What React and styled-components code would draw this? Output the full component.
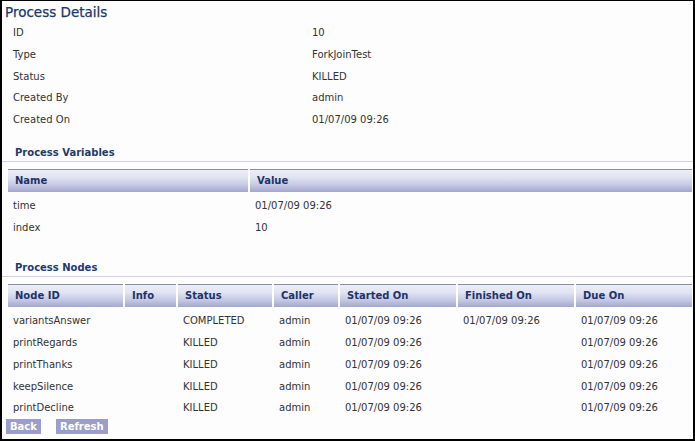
import React from "react";
import styled, { createGlobalStyle } from "styled-components";

const Global = createGlobalStyle`
  html, body { margin: 0; padding: 0; background: #fff; }
  * { box-sizing: border-box; }
`;

const Frame = styled.div`
  width: 695px;
  height: 441px;
  border-style: solid;
  border-color: #000;
  border-width: 1px 2px 2px 2px;
  background: #fdfdfd;
  font-family: "DejaVu Sans", Verdana, sans-serif;
  font-size: 10px;
  color: #333;
  overflow: hidden;
`;

const Title = styled.h1`
  margin: 0;
  height: 21px;
  padding: 2px 0 0 3px;
  font-size: 13.5px;
  line-height: 19px;
  font-weight: normal;
  color: #1c3869;
  -webkit-text-stroke: 0.25px #1c3869;
`;

const DetailRow = styled.div`
  display: grid;
  grid-template-columns: 299px 1fr;
  height: 21.75px;
  line-height: 21.75px;
  padding-left: 11px;
`;

const SectionHeading = styled.h2`
  margin: ${(p) => p.$top}px 0 0 0;
  padding-left: 13px;
  height: 17px;
  line-height: 16px;
  font-size: 10px;
  font-weight: bold;
  color: #1f3a6b;
  border-bottom: 1px solid #d4d0dc;
`;

const Table = styled.div`
  margin: 7px 1px 0 6px;
`;

const HeaderRow = styled.div`
  display: grid;
  grid-template-columns: ${(p) => p.$cols};
  column-gap: 2px;
  height: 23px;
`;

const HeaderCell = styled.div`
  border-top: 1px solid #8a8ca6;
  background: linear-gradient(
    to bottom,
    #eceef7 0%,
    #e0e3f1 35%,
    #c3c7e3 70%,
    #a2a7cc 100%
  );
  padding-left: 7px;
  line-height: 21px;
  font-weight: bold;
  color: #1e3369;
  white-space: nowrap;
  overflow: hidden;
`;

const Body = styled.div`
  padding-top: 3px;
`;

const BodyRow = styled.div`
  display: grid;
  grid-template-columns: ${(p) => p.$cols};
  column-gap: 2px;
  height: 21.75px;
  line-height: 21.75px;
`;

const BodyCell = styled.div`
  padding-left: 5px;
  white-space: nowrap;
  overflow: hidden;
`;

const ButtonBar = styled.div`
  display: flex;
  gap: 15px;
  margin: 0 0 0 4px;
`;

const Button = styled.button`
  border: none;
  margin: 0;
  height: 15px;
  padding: 0 4px;
  background: #9b9ecb;
  color: #fff;
  font-family: "DejaVu Sans", Verdana, sans-serif;
  font-size: 10px;
  font-weight: bold;
  line-height: 15px;
  cursor: pointer;
`;

const details = [
  ["ID", "10"],
  ["Type", "ForkJoinTest"],
  ["Status", "KILLED"],
  ["Created By", "admin"],
  ["Created On", "01/07/09 09:26"],
];

const varCols = "240px 1fr";
const variables = [
  ["time", "01/07/09 09:26"],
  ["index", "10"],
];

const nodeCols = "115px 51px 94px 64px 116px 116px 1fr";
const nodeHeaders = ["Node ID", "Info", "Status", "Caller", "Started On", "Finished On", "Due On"];
const d = "01/07/09 09:26";
const nodes = [
  ["variantsAnswer", "", "COMPLETED", "admin", d, d, d],
  ["printRegards", "", "KILLED", "admin", d, "", d],
  ["printThanks", "", "KILLED", "admin", d, "", d],
  ["keepSilence", "", "KILLED", "admin", d, "", d],
  ["printDecline", "", "KILLED", "admin", d, "", d],
];

export default function App() {
  return (
    <>
      <Global />
      <Frame>
        <Title>Process Details</Title>
        {details.map(([k, v]) => (
          <DetailRow key={k}>
            <span>{k}</span>
            <span>{v}</span>
          </DetailRow>
        ))}

        <SectionHeading $top={14}>Process Variables</SectionHeading>
        <Table>
          <HeaderRow $cols={varCols}>
            <HeaderCell>Name</HeaderCell>
            <HeaderCell>Value</HeaderCell>
          </HeaderRow>
          <Body>
            {variables.map(([n, v]) => (
              <BodyRow key={n} $cols={varCols}>
                <BodyCell>{n}</BodyCell>
                <BodyCell>{v}</BodyCell>
              </BodyRow>
            ))}
          </Body>
        </Table>

        <SectionHeading $top={22}>Process Nodes</SectionHeading>
        <Table>
          <HeaderRow $cols={nodeCols}>
            {nodeHeaders.map((h) => (
              <HeaderCell key={h}>{h}</HeaderCell>
            ))}
          </HeaderRow>
          <Body>
            {nodes.map((row) => (
              <BodyRow key={row[0]} $cols={nodeCols}>
                {row.map((c, i) => (
                  <BodyCell key={i}>{c}</BodyCell>
                ))}
              </BodyRow>
            ))}
          </Body>
        </Table>

        <ButtonBar>
          <Button>Back</Button>
          <Button>Refresh</Button>
        </ButtonBar>
      </Frame>
    </>
  );
}
